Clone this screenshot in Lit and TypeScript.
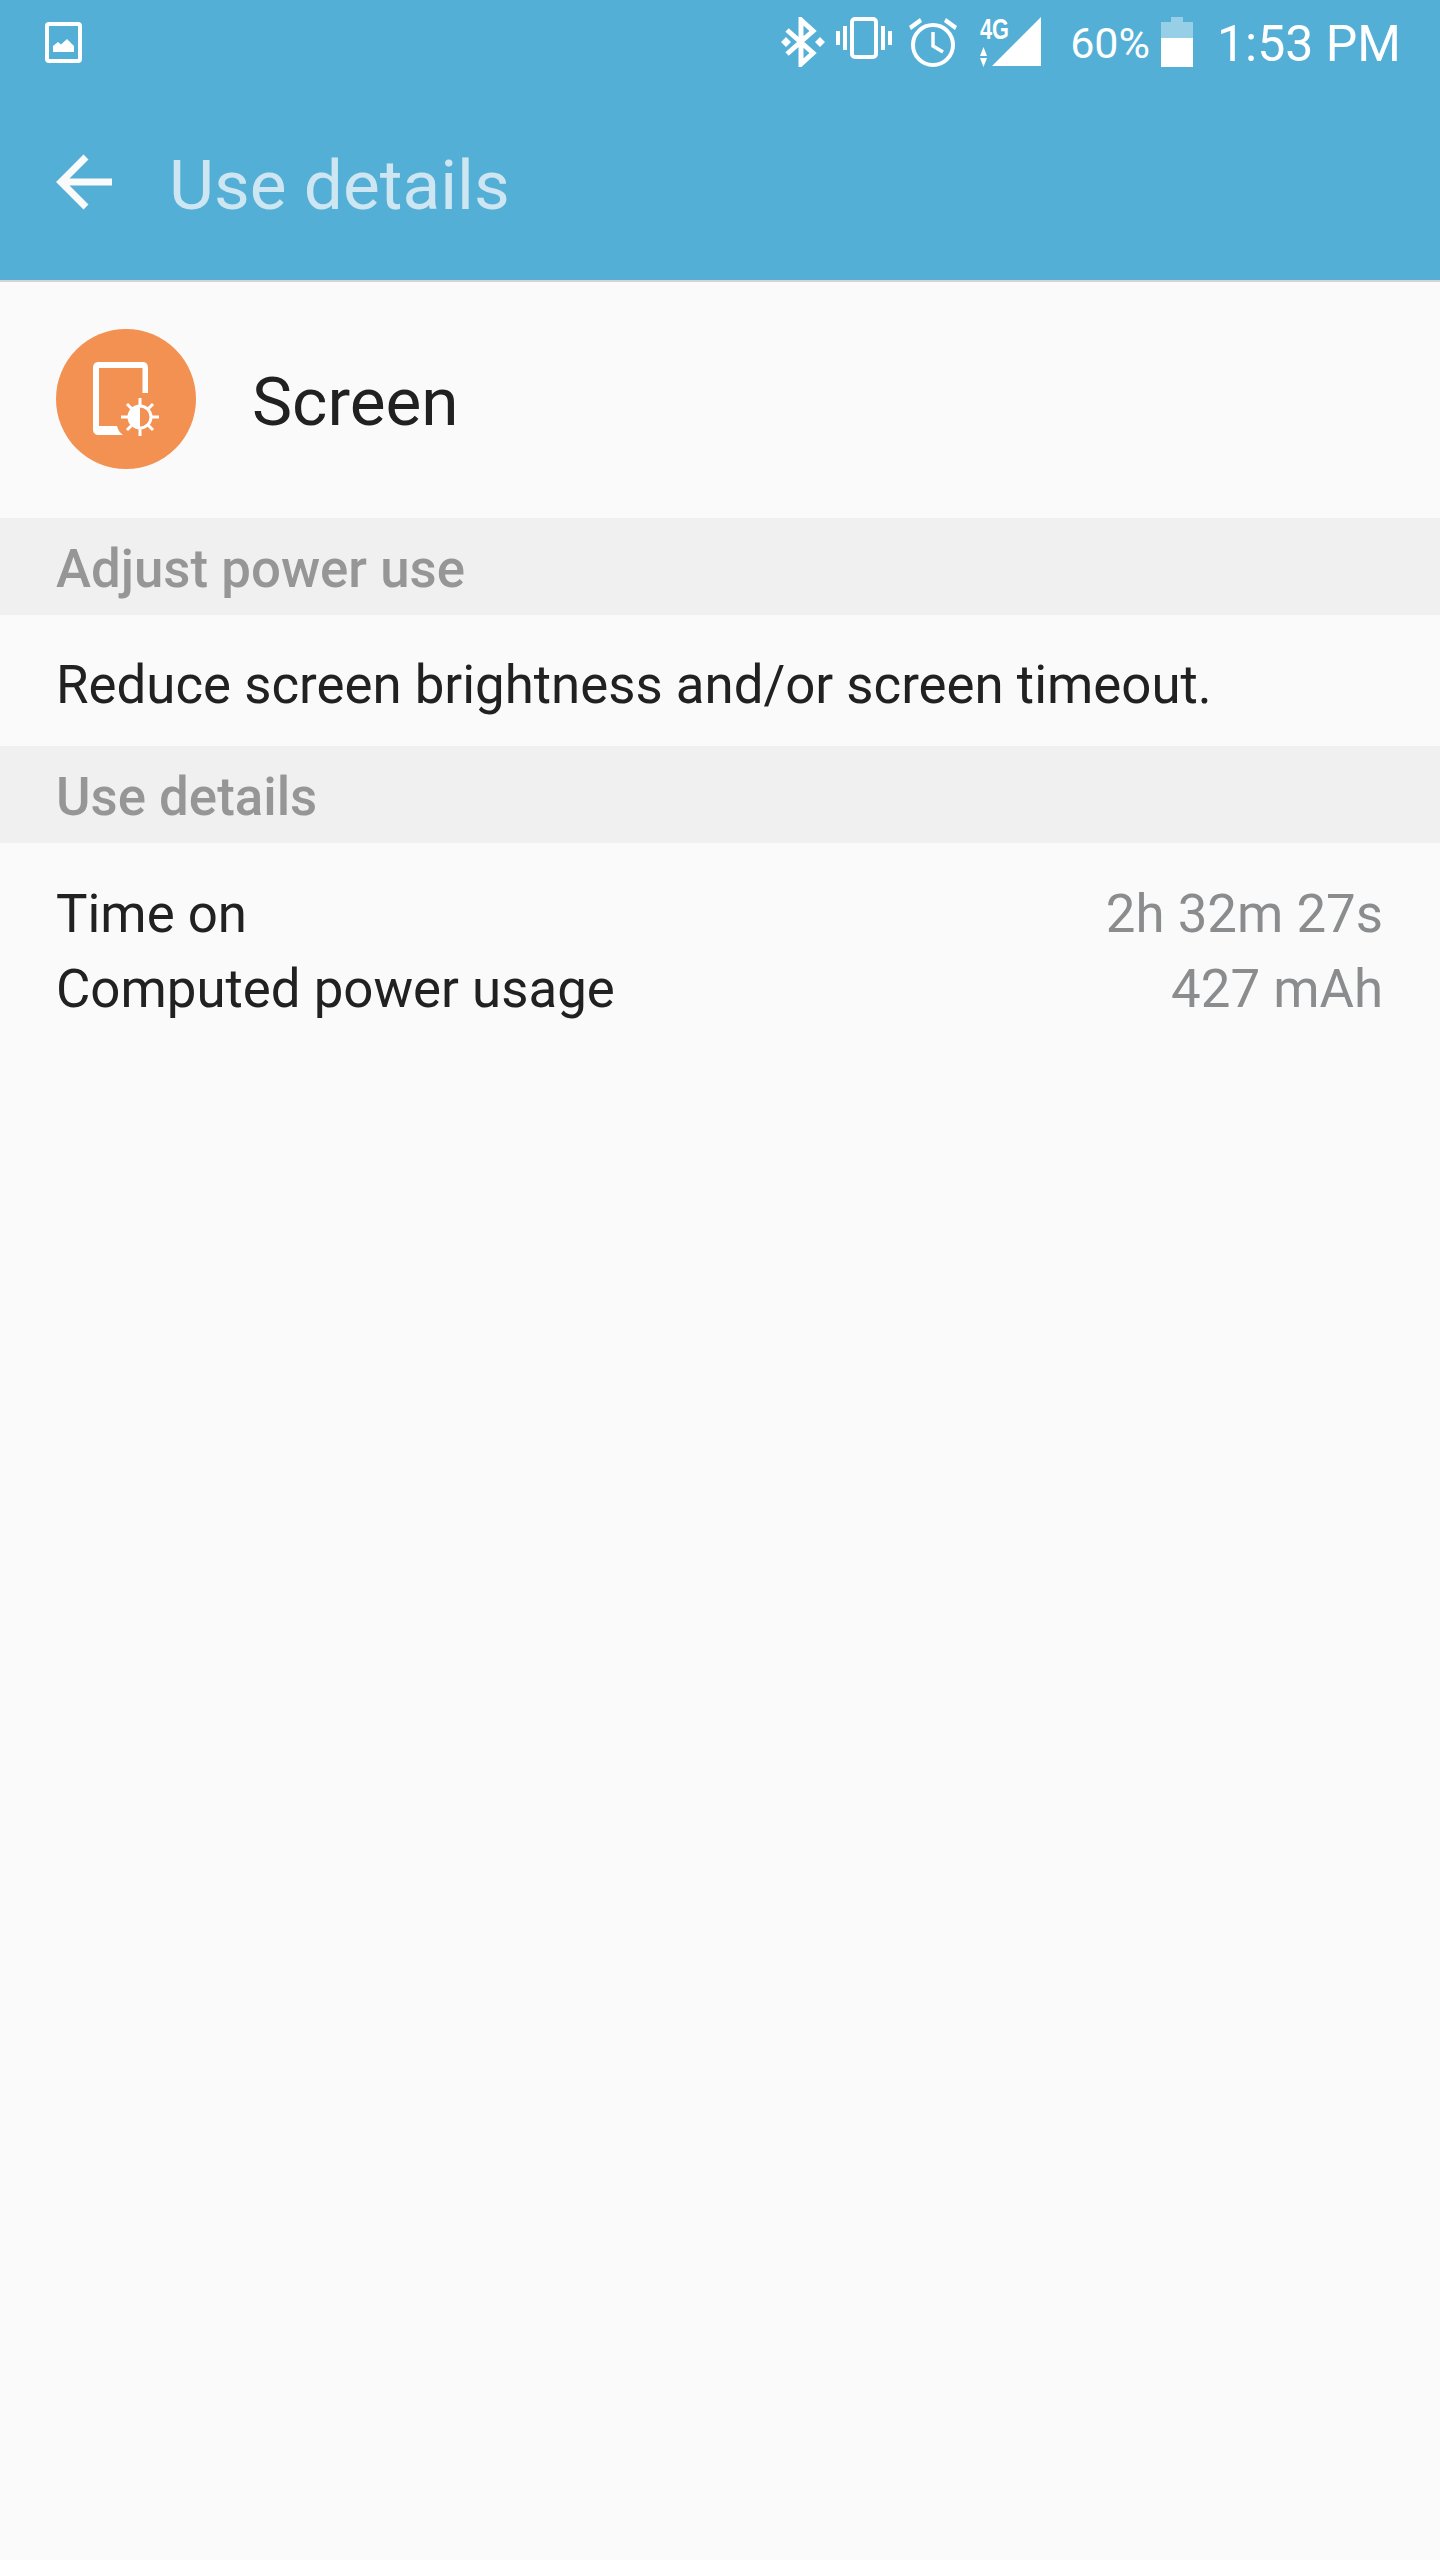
import { LitElement, css, html, svg } from 'lit';
import { customElement } from 'lit/decorators.js';

const galleryIcon = svg`<svg class="icon" width="38" height="42" viewBox="0 0 38 42">
  <rect x="2" y="2" width="33" height="37" rx="2" fill="none" stroke="#fff" stroke-width="4"/>
  <path d="M8 30V24L13 20L16 22.500L22 17L29 24V30Z" fill="#fff"/>
</svg>`;

const bluetoothIcon = svg`<svg class="icon" width="44" height="50" viewBox="0 0 44 50">
  <path d="M6 13L32 36L20 47V3L32 14L6 37" fill="none" stroke="#fff" stroke-width="5"/>
  <path d="M0 25L5 20L10 25L5 30ZM34 25L39 20L44 25L39 30Z" fill="#fff"/>
</svg>`;

const vibrateIcon = svg`<svg class="icon" width="56" height="42" viewBox="0 0 56 42">
  <rect x="16" y="2" width="24" height="38" rx="3" fill="none" stroke="#fff" stroke-width="4"/>
  <path d="M0 14H4V28H0ZM7 9H11V33H7ZM45 9H49V33H45ZM52 14H56V28H52Z" fill="#fff"/>
</svg>`;

const alarmIcon = svg`<svg class="icon" width="50" height="50" viewBox="0 0 50 50">
  <circle cx="25" cy="28" r="20" fill="none" stroke="#fff" stroke-width="4"/>
  <path d="M25 15V29L35 35" fill="none" stroke="#fff" stroke-width="3.500"/>
  <path d="M1 9L12 1L14 5L3 13ZM49 9L38 1L36 5L47 13Z" fill="#fff"/>
</svg>`;

const signalIcon = svg`<svg class="icon" width="62" height="50" viewBox="0 0 62 50">
  <path d="M61 0V49H12Z" fill="#fff"/>
  <path d="M3.500 30L7 39H0ZM0 41H7L3.500 50Z" fill="#fff"/>
</svg>`;

const batteryIcon = svg`<svg class="icon" width="32" height="50" viewBox="0 0 32 50">
  <path d="M10 0H22V5H32V21H0V5H10Z" fill="#fff" fill-opacity="0.4"/>
  <rect y="21" width="32" height="29" fill="#fff"/>
</svg>`;

const backIcon = svg`<svg class="back" width="56" height="56" viewBox="0 0 56 56">
  <path d="M30 3L5 28L30 53M5 28H56" fill="none" stroke="#fafafa" stroke-width="7"/>
</svg>`;

const screenIcon = svg`<svg width="140" height="140" viewBox="0 0 140 140">
  <circle cx="70" cy="70" r="70" fill="#f39153"/>
  <path d="M92 64V39C92 35 90 33 87 33H43C39 33 37 35 37 39V100C37 104 39 106 43 106H67C64 104 62 101 61 97H43V39H86.500V64Z" fill="#fff"/>
  <circle cx="84" cy="88" r="11" fill="none" stroke="#fff" stroke-width="3"/>
  <path d="M84 77A11 11 0 0 0 84 99Z" fill="#fff"/>
  <path d="M84 69V77M84 99V107M65 88H73M95 88H103M71 75L77 81M97 75L91 81M71 101L77 95M97 101L91 95" stroke="#fff" stroke-width="3"/>
</svg>`;

@customElement('app-root')
export class AppRoot extends LitElement {
  static styles = css`
    :host {
      display: block;
      min-height: 2560px;
      background: #fafafa;
      font-family: Roboto, 'Liberation Sans', sans-serif;
      color: #212121;
    }

    .appbar {
      height: 280px;
      background: #53afd5;
      border-bottom: 2px solid #d4d4d4;
    }

    .status {
      display: flex;
      align-items: flex-start;
      height: 84px;
      padding: 17px 39px 0 45px;
      box-sizing: border-box;
      color: #fff;
    }

    .icon {
      display: block;
      flex-shrink: 0;
    }

    .gallery {
      margin: 5px auto 0 0;
    }

    .status-icons {
      display: flex;
      align-items: flex-start;
    }

    .spacer-sm {
      width: 11px;
    }

    .spacer-md {
      width: 16px;
    }

    .spacer-lg {
      width: 22px;
    }

    .signal {
      position: relative;
      flex-shrink: 0;
    }

    .network {
      position: absolute;
      left: 0;
      top: -3px;
      font-family: 'Liberation Sans', Roboto, sans-serif;
      font-size: 29px;
      font-weight: 700;
      line-height: 30px;
      transform: scaleX(0.75);
      transform-origin: left center;
    }

    .percent {
      margin: 1px 11px 0 28px;
      font-size: 43px;
      line-height: 50px;
    }

    .time {
      margin: 2px 0 0 24px;
      font-size: 50px;
      line-height: 50px;
    }

    .title-row {
      display: flex;
      align-items: center;
      padding: 60px 0 0 56px;
    }

    .back {
      display: block;
      margin-bottom: 6px;
    }

    .title {
      margin: 2px 0 0 57px;
      font-size: 69.400px;
      line-height: 80px;
      color: #cde6f2;
    }

    .app-row {
      display: flex;
      align-items: center;
      gap: 56px;
      height: 236px;
      padding-left: 56px;
    }

    .app-row svg {
      display: block;
      margin-bottom: 2px;
    }

    .app-name {
      position: relative;
      top: 1px;
      font-size: 67.500px;
    }

    .band {
      height: 97px;
      padding-left: 56px;
      background: #f0f0f0;
      color: #969696;
      font-size: 52.800px;
      font-weight: 500;
      line-height: 103px;
    }

    .tip {
      height: 131px;
      padding-left: 56px;
      font-size: 52.800px;
      line-height: 141px;
    }

    .details {
      padding: 34px 57px 0 56px;
    }

    .line {
      display: flex;
      justify-content: space-between;
      font-size: 52.800px;
      line-height: 75px;
    }

    .value {
      color: #8a8c8e;
    }
  `;

  render() {
    return html`
      <header class="appbar">
        <div class="status">
          <span class="gallery">${galleryIcon}</span>
          <div class="status-icons">
            ${bluetoothIcon}
            <span class="spacer-sm"></span>${vibrateIcon}
            <span class="spacer-md"></span>${alarmIcon}
            <span class="spacer-lg"></span>
            <div class="signal">${signalIcon}<span class="network">4G</span></div>
          </div>
          <span class="percent">60%</span>
          ${batteryIcon}
          <span class="time">1:53 PM</span>
        </div>
        <div class="title-row">
          ${backIcon}
          <span class="title">Use details</span>
        </div>
      </header>
      <div class="app-row">
        ${screenIcon}
        <span class="app-name">Screen</span>
      </div>
      <div class="band">Adjust power use</div>
      <div class="tip">Reduce screen brightness and/or screen timeout.</div>
      <div class="band">Use details</div>
      <div class="details">
        <div class="line"><span>Time on</span><span class="value">2h 32m 27s</span></div>
        <div class="line"><span>Computed power usage</span><span class="value">427 mAh</span></div>
      </div>
    `;
  }
}

declare global {
  interface HTMLElementTagNameMap {
    'app-root': AppRoot;
  }
}
